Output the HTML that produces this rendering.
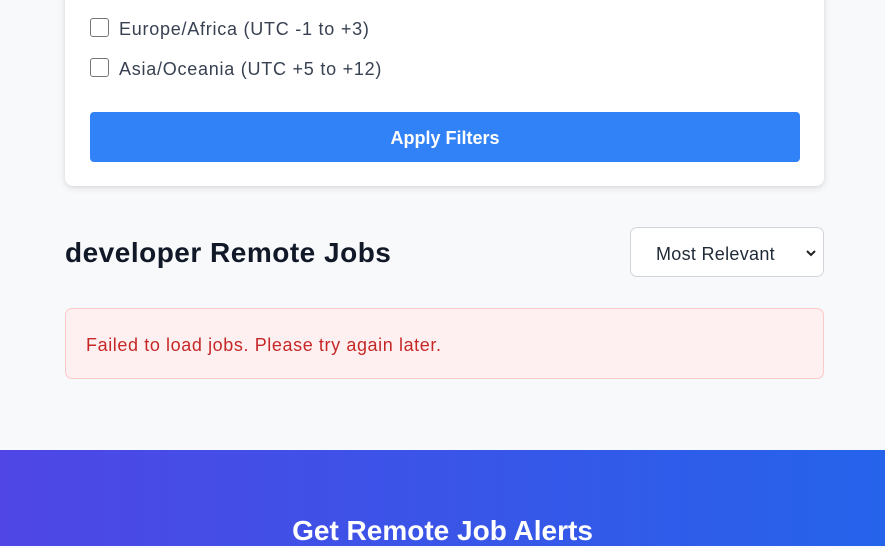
<!DOCTYPE html>
<html><head><style>
*{margin:0;padding:0;box-sizing:border-box}
body{width:885px;height:546px;overflow:hidden;background:#f8f9fb;font-family:"Liberation Sans",sans-serif;position:relative}
.card{position:absolute;left:65px;top:-20px;width:759px;height:206px;background:#fff;border-radius:8px;box-shadow:0 2px 8px rgba(0,0,0,.1),0 1px 3px rgba(0,0,0,.06)}
.cb{position:absolute;left:90px;width:19px;height:19px;border:1.5px solid #767676;border-radius:3px;background:#fff}
.lbl{position:absolute;left:119px;font-size:18px;color:#374151;line-height:20px;letter-spacing:0.75px}
.btn{position:absolute;left:90px;top:112px;width:710px;height:50px;background:#3182f6;border-radius:4px;color:#fff;font-weight:bold;font-size:18px;text-align:center;line-height:52px}
h2{position:absolute;left:65px;top:236px;font-size:28px;font-weight:bold;color:#111827;line-height:34px;letter-spacing:0.5px}
.sel{position:absolute;left:630px;top:227px;width:194px;height:50px;background:#fff;border:1px solid #d1d5db;border-radius:7px;font-size:18px;color:#1f2937;line-height:52px;padding-left:25px;letter-spacing:0.3px}
.err{position:absolute;left:65px;top:308px;width:759px;height:71px;background:#fef0f0;border:1px solid #fcc9c9;border-radius:7px;color:#c62828;font-size:18px;line-height:73px;padding-left:20px;letter-spacing:0.6px}
.band{position:absolute;left:0;top:450px;width:885px;height:96px;background:linear-gradient(90deg,#4f46e5,#2563eb)}
.band h3{position:absolute;left:0;width:885px;top:64px;text-align:center;color:#fff;font-size:28px;font-weight:bold;line-height:34px}
</style></head><body>
<div class="card"></div>
<div class="cb" style="top:18px"></div><div class="lbl" style="top:19px">Europe/Africa (UTC -1 to +3)</div>
<div class="cb" style="top:58px"></div><div class="lbl" style="top:59px">Asia/Oceania (UTC +5 to +12)</div>
<div class="btn">Apply Filters</div>
<h2>developer Remote Jobs</h2>
<div class="sel">Most Relevant<svg style="position:absolute;right:6px;top:20px" width="12" height="10" viewBox="0 0 12 10"><path d="M2 3l4 4 4-4" fill="none" stroke="#222" stroke-width="2"/></svg></div>
<div class="err">Failed to load jobs. Please try again later.</div>
<div class="band"><h3>Get Remote Job Alerts</h3></div>
</body></html>
